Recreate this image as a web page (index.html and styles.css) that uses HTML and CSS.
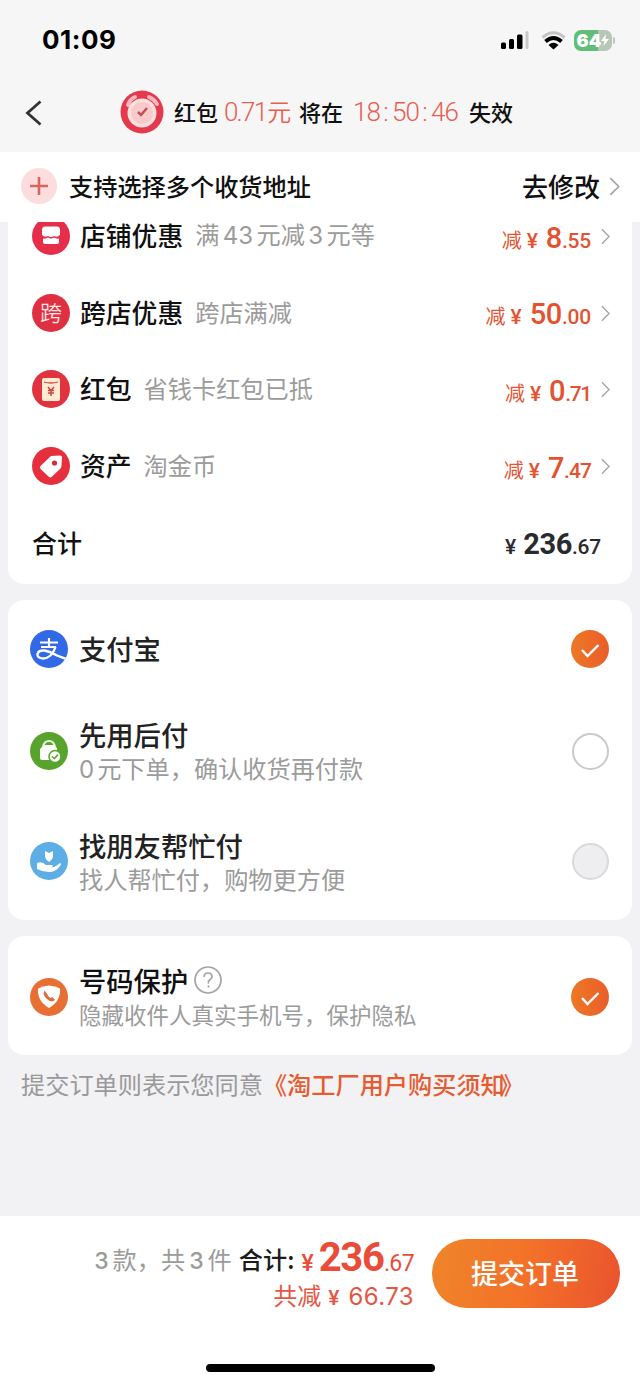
FILE: index.html
```html
<!DOCTYPE html>
<html lang="zh-CN">
<head>
<meta charset="utf-8">
<title>确认订单</title>
<link rel="stylesheet" href="styles.css">
</head>
<body>
<header class="top">
  <div class="status">
    <span class="clock">01:09</span>
    <span class="status-icons">
      <svg class="signal" width="29" height="20" viewBox="0 0 29 20"><rect x="1" y="12.500" width="5" height="6.500" rx="1.5"/><rect x="9" y="9" width="5" height="10" rx="1.500"/><rect x="17" y="4.500" width="5.500" height="14.500" rx="1.500"/><rect x="25.500" y="1" width="3" height="18" rx="1.500" fill="#c9c9c9"/></svg>
      <svg class="wifi" width="25" height="19" viewBox="0 0 25 19" fill="none"><path d="M1.500 6.500Q12.500-3 23.500 6.500" stroke="#c4c4c4" stroke-width="3"/><path d="M4.500 10.500Q12.500 3.500 20.500 10.500" stroke="#000" stroke-width="3.800"/><path d="M7.500 14Q12.500 9.500 17.500 14L12.500 18.500Z" fill="#000"/></svg>
      <span class="battery"><b>64</b><svg width="8" height="12" viewBox="0 0 8 12"><path d="M5 0L0 7H3.500L2.500 12L8 5H4.500Z" fill="#fff"/></svg></span>
      <i class="battery-tip"></i>
    </span>
  </div>
  <div class="nav">
    <svg class="back" width="18" height="26" viewBox="0 0 18 26"><path d="M15.500 1.500L2.500 13L15.500 24.500" fill="none" stroke="#333" stroke-width="2.800"/></svg>
    <svg class="alarm" width="44" height="44" viewBox="0 0 44 44"><circle cx="22" cy="22" r="21.500" fill="#e5394e"/><path d="M8 15Q10 9 15 7M29 7Q34 9 37 14" stroke="#f9b6bb" stroke-width="4" stroke-linecap="round" fill="none"/><circle cx="22" cy="23" r="14.500" fill="#fbe0dd"/><circle cx="22" cy="23" r="11" fill="#f8cbca"/><path d="M18 22L21 25L27 18" stroke="#bd5259" stroke-width="2.500" fill="none"/></svg>
    <div class="notice"><span class="w1">红包</span><span class="w2"><em>0.71</em>元</span><span class="w3">将在</span><span class="w4"><em>18</em><em>:</em><em>50</em><em>:</em><em>46</em></span><span>失效</span></div>
  </div>
</header>

<section class="address">
  <svg class="plus" width="36" height="36" viewBox="0 0 36 36"><circle cx="18" cy="18" r="18" fill="#fcdcdd"/><path d="M18 9V27M9 18H27" stroke="#d76561" stroke-width="2.600"/></svg>
  <span class="address-text">支持选择多个收货地址</span>
  <span class="modify">去修改</span>
  <svg class="chev big" viewBox="0 0 10 18"><path d="M1 1L9 9L1 17"/></svg>
</section>

<main>
  <div class="clip">
  <section class="card discounts">
    <div class="row">
      <svg class="ico" viewBox="0 0 38 38"><circle cx="19" cy="19" r="19" fill="#e62d49"/><path d="M13 9.500H25Q28 9.500 28 13V18Q25 21 22 19Q19 21 16 19Q13 21 10 18V13Q10 9.500 13 9.500Z" fill="#fff"/><path d="M11 21.500Q14 22 16 20.500Q19 22.500 22 20.500Q24 22 27 21.500V25Q27 27 25 27H13Q11 27 11 25Z" fill="#fff"/></svg>
      <span class="name">店铺优惠</span><span class="sub">满<em>43</em>元减<em>3</em>元等</span>
      <span class="amount"><span class="cut">减</span><span class="yen">¥</span><b>8</b><small>.55</small></span>
      <svg class="chev" viewBox="0 0 10 18"><path d="M1 1L9 9L1 17"/></svg>
    </div>
    <div class="row">
      <span class="ico kua">跨</span>
      <span class="name">跨店优惠</span><span class="sub">跨店满减</span>
      <span class="amount"><span class="cut">减</span><span class="yen">¥</span><b>50</b><small>.00</small></span>
      <svg class="chev" viewBox="0 0 10 18"><path d="M1 1L9 9L1 17"/></svg>
    </div>
    <div class="row">
      <svg class="ico" viewBox="0 0 38 38"><circle cx="19" cy="19" r="19" fill="#e13240"/><rect x="10" y="8" width="18" height="23" rx="2" fill="#ffebd2"/><path d="M12 12Q19 14 26 12" fill="none" stroke="#d44a43" stroke-width="1.300"/><path d="M16 17L19 20.500L22 17M19 20V26M16 20.500H22M16 23H22" fill="none" stroke="#c54a3d" stroke-width="1.500"/></svg>
      <span class="name">红包</span><span class="sub">省钱卡红包已抵</span>
      <span class="amount tight"><span class="cut">减</span><span class="yen">¥</span><b>0</b><small>.71</small></span>
      <svg class="chev" viewBox="0 0 10 18"><path d="M1 1L9 9L1 17"/></svg>
    </div>
    <div class="row">
      <svg class="ico" viewBox="0 0 38 38"><circle cx="19" cy="19" r="19" fill="#e52f3c"/><path d="M19 9L28 8.500Q30 8.500 30 10.500L29.500 19Q29.500 20.500 28 22L19.500 30Q18 31 16.500 29.500L8.500 22Q7.500 20.500 8.500 19Z" fill="#fff"/><circle cx="22.500" cy="16" r="2.600" fill="#d12f38"/></svg>
      <span class="name">资产</span><span class="sub">淘金币</span>
      <span class="amount snug"><span class="cut">减</span><span class="yen">¥</span><b>7</b><small>.47</small></span>
      <svg class="chev" viewBox="0 0 10 18"><path d="M1 1L9 9L1 17"/></svg>
    </div>
    <div class="row total">
      <span class="name">合计</span>
      <span class="amount"><span class="yen">¥</span><b>236</b><small>.67</small></span>
    </div>
  </section>
  </div>

  <section class="card pay">
    <div class="option first">
      <svg class="ico" viewBox="0 0 38 38"><defs><clipPath id="disc"><circle cx="19" cy="19" r="19"/></clipPath></defs><circle cx="19" cy="19" r="19" fill="#3269e6"/><g clip-path="url(#disc)" fill="none" stroke="#fff"><path d="M10 12.500H28M19 8V17M11 17H26" stroke-width="2.100"/><path d="M25.500 17Q22 28 13 28.500Q7 28 7.500 24Q8.500 20 14.500 20.500Q20 21.500 27 25.500L39 30" stroke-width="2.400"/></g></svg>
      <div class="label"><span class="name">支付宝</span></div>
      <svg class="check" viewBox="0 0 38 38"><circle cx="19" cy="19" r="19" fill="url(#orange)"/><path d="M11 20L16.500 26L27.500 15" fill="none" stroke="#fff" stroke-width="2.400"/><defs><linearGradient id="orange"><stop offset="0" stop-color="#ed7826"/><stop offset="1" stop-color="#ea5d29"/></linearGradient></defs></svg>
    </div>
    <div class="option second">
      <svg class="ico" viewBox="0 0 38 38"><circle cx="19" cy="19" r="19" fill="#58a32c"/><path d="M10 17L14 13H24L27 16V28H12Q10 28 10 26Z" fill="#fff"/><path d="M13 15Q14 9 19 9Q24 9 25 15" fill="none" stroke="#e9f8df" stroke-width="2"/><circle cx="25" cy="24.500" r="6" fill="#fff" stroke="#58a32c" stroke-width="1.500"/><path d="M22 24.500L24.500 26.500L28 22.500" fill="none" stroke="#58a32c" stroke-width="1.600"/></svg>
      <div class="label"><span class="name">先用后付</span><span class="sub"><em>0</em>元下单，确认收货再付款</span></div>
      <span class="radio"></span>
    </div>
    <div class="option third">
      <svg class="ico" viewBox="0 0 38 38"><circle cx="19" cy="19" r="19" fill="#5caee4"/><path d="M15 9L19 11L23 9V15Q22 18 19 20Q16 18 15 15Z" fill="#fff"/><path d="M7 21Q12 19 16 23H22Q24 24 21 26H16Q24 27 30 21Q32 22 30 24Q26 30 19 30Q13 30 7 27Z" fill="#fff"/></svg>
      <div class="label"><span class="name">找朋友帮忙付</span><span class="sub">找人帮忙付，购物更方便</span></div>
      <span class="radio off"></span>
    </div>
  </section>

  <section class="card privacy">
    <div class="option">
      <svg class="ico" viewBox="0 0 38 38"><circle cx="19" cy="19" r="19" fill="#e76f33"/><path d="M19 7.500Q25 8 30 10.500Q31 23 19 30Q7 23 8 10.500Q13 8 19 7.500Z" fill="#fff"/><path d="M14.500 12.500Q12 17 17 21Q21 25 25 22L22.500 19L20.500 20Q17.500 18 17.500 16.500Z" fill="#de6d3b"/></svg>
      <div class="label"><span class="name">号码保护<svg class="help" width="28" height="28" viewBox="0 0 28 28" fill="none" stroke="#a4a4a4"><circle cx="14" cy="14" r="13" stroke-width="1.700"/><path d="M10 11Q10 7 14 7Q18 7 18 10.500Q18 12.500 14.500 15V17.500M14.500 19.500V21.500" stroke-width="1.700"/></svg></span><span class="sub">隐藏收件人真实手机号，保护隐私</span></div>
      <svg class="check" viewBox="0 0 38 38"><circle cx="19" cy="19" r="19" fill="url(#orange)"/><path d="M11 20L16.500 26L27.500 15" fill="none" stroke="#fff" stroke-width="2.400"/></svg>
    </div>
  </section>
  <p class="agreement">提交订单则表示您同意<a>《淘工厂用户购买须知<span>》</span></a></p>
</main>

<footer class="submit-bar">
  <div class="checkout">
    <div class="sum">
      <div class="sum-line"><span class="count"><em>3</em>款，共<em>3</em>件</span><span class="sum-label">合计:</span><span class="yen">¥</span><b>236</b><small>.67</small></div>
      <div class="saved"><span>共减</span><span class="yen">¥</span><em>66.73</em></div>
    </div>
    <button class="submit">提交订单</button>
  </div>
  <div class="home"></div>
</footer>
</body>
</html>
```

FILE: styles.css
```css
* { box-sizing: border-box; }
body {
  margin: 0;
  width: 640px;
  height: 1386px;
  display: flex;
  flex-direction: column;
  overflow: hidden;
  background: #f2f1f4;
  color: #111;
  font-family: "Noto Sans CJK SC", sans-serif;
  font-weight: 500;
  white-space: nowrap;
}
em, i { font-style: normal; }
svg { display: block; flex: none; }

.top { height: 152px; background: #f6f6f6; flex: none; }
.status {
  height: 78px;
  display: flex;
  align-items: center;
  justify-content: space-between;
  padding: 2px 25px 0 42px;
}
.clock { font: 700 26px/32px Inter, sans-serif; color: #000; letter-spacing: .5px; }
.status-icons { display: flex; align-items: center; }
.wifi { margin: 0 8px 0 12px; }
.battery {
  width: 38px;
  height: 21px;
  border-radius: 7px;
  display: flex;
  align-items: center;
  justify-content: center;
  background: linear-gradient(90deg, #63bd78 64%, #b5c7b7 64%);
  color: #fff;
  font: 700 18px/21px Inter, sans-serif;
}
.battery-tip { width: 2px; height: 7px; margin-left: 1px; border-radius: 0 2px 2px 0; background: #b9c6ba; }

.nav { height: 70px; display: flex; align-items: center; padding-left: 25px; }
.alarm { margin-left: 77px; margin-right: 10px; margin-top: -2px; }
.notice { display: flex; align-items: baseline; font-size: 22px; line-height: 32px; margin-top: -3px; }
.notice em { font-family: Roboto, sans-serif; font-weight: 300; }
.w1 { width: 50px; }
.w2 { width: 75px; font-size: 24px; font-weight: 350; color: #e95e50; }
.w2 em { font-size: 26px; letter-spacing: -1.8px; margin-right: 1px; }
.w3 { width: 54px; }
.w4 { width: 116px; display: flex; color: #e95e50; font-size: 26px; }
.w4 em:nth-child(odd) { width: 27px; letter-spacing: -1px; }
.w4 em:nth-child(even) { width: 12px; text-align: center; }

.address {
  height: 70px;
  flex: none;
  display: flex;
  align-items: center;
  padding: 0 20px 2px 21px;
  background: #fff;
}
.address-text { margin-left: 12px; margin-top: -1px; font-size: 24.200px; line-height: 36px; }
.modify { margin-left: auto; margin-right: 9px; font-size: 26px; line-height: 36px; }
.chev { width: 9px; height: 17px; fill: none; stroke: #a5a5a8; stroke-width: 1.600; }
.chev.big { width: 11px; height: 19px; }

main { padding: 0 8px; flex: none; height: 994px; }
.clip { height: 362px; overflow: hidden; }
.card { background: #fff; border-radius: 16px; }
.discounts { margin-top: -24px; height: 386px; padding: 0 23px 0 24px; }
.row { height: 76.600px; display: flex; align-items: center; }
.ico { width: 38px; height: 38px; flex: none; }
.kua { border-radius: 50%; background: #df3042; color: #ffe6e2; font-size: 22px; font-weight: 350; line-height: 35px; text-align: center; }
.row .name { margin-left: 10px; font-size: 25.800px; line-height: 36px; margin-top: -2px; }
.sub { font-size: 24.200px; line-height: 34px; font-weight: 400; color: #9b9b9b; }
.sub em { font: 400 24px/34px Inter, sans-serif; margin: 0 4px; }
.row .sub { margin-left: 12px; margin-top: -2px; }
.row .sub em { margin: 0 3.400px; }
.amount { margin-left: auto; margin-top: 6px; display: flex; align-items: baseline; color: #e35332; font-family: Roboto, sans-serif; line-height: 34px; }
.cut { font-family: "Noto Sans CJK SC", sans-serif; font-size: 20px; font-weight: 400; line-height: 24px; }
.yen { font: 500 21px/24px Roboto, sans-serif; margin: 0 8px 0 5px; }
.amount b { font-size: 29px; font-weight: 500; letter-spacing: -.4px; }
.amount small { font-size: 21px; font-weight: 500; letter-spacing: -.2px; }
.tight small { letter-spacing: -1.300px; }
.snug small { letter-spacing: -.900px; }
.row .chev { margin-left: 10px; margin-right: -1px; margin-top: 1px; }
.total .name { margin-left: 0; font-size: 25px; margin-top: -1px; }
.total .amount { color: #292a2d; margin-right: 8px; }
.total .amount b { font-weight: 700; }
.total .yen { margin-right: 7px; }

.pay { margin-top: 16px; height: 320px; color: #222; }
.option { display: flex; align-items: center; padding: 0 23px 0 22px; }
.first { height: 97px; }
.second { height: 108px; }
.third { height: 112px; }
.label { display: flex; flex-direction: column; margin-left: 11px; margin-right: auto; }
.label .name { font-size: 27.300px; line-height: 38px; display: flex; align-items: center; }
.label .sub { line-height: 30px; }
.label .sub em { margin: 0 3px 0 0; }
.first .label { margin-top: -1px; }
.second .label { margin-top: -1px; }
.third .label { margin-top: -2px; }
.check { width: 38px; height: 38px; }
.radio { width: 37px; height: 37px; border: 2px solid #c9c9ce; border-radius: 50%; }
.radio.off { background: #eeedf0; border-color: #dad9dd; }

.privacy { margin-top: 16px; height: 119px; }
.privacy .option { height: 121px; }
.privacy .sub { font-size: 22.500px; }
.privacy .label { margin-top: -4px; }
.help { margin-left: 6px; }

.agreement { margin: 0; padding: 11px 0 0 13px; font-size: 24.200px; line-height: 36px; font-weight: 400; color: #999; }
.agreement a { color: #e65c31; font-weight: 500; }
.agreement a span { margin-left: -5px; }

.submit-bar { height: 170px; background: #fff; flex: none; display: flex; flex-direction: column; align-items: center; }
.checkout { width: 100%; height: 148px; display: flex; align-items: flex-start; padding: 23px 20px 0 0; justify-content: flex-end; }
.sum { display: flex; flex-direction: column; align-items: flex-end; margin-right: 18px; }
.sum-line { display: flex; align-items: baseline; height: 38px; line-height: 38px; color: #e94d3a; }
.count { color: #9b9b9b; font-size: 24.200px; font-weight: 400; margin-right: 7px; position: relative; top: -2px; }
.count em { font: 500 23px/38px Inter, sans-serif; margin: 0 4px; }
.sum-label { color: #1c1c1c; font-size: 24.200px; position: relative; top: -2px; }
.sum-line .yen { font-size: 23px; margin: 0 5px 0 7px; }
.sum-line b { font: 700 40px/38px Roboto, sans-serif; letter-spacing: -1.200px; }
.sum-line small { font: 400 23px/38px Roboto, sans-serif; letter-spacing: -.6px; }
.saved { display: flex; align-items: baseline; color: #e55744; font-size: 24px; line-height: 36px; font-weight: 400; }
.saved .yen { margin: 0 9px 0 7px; }
.saved em { font: 400 24px/36px Inter, sans-serif; letter-spacing: .4px; }
.submit {
  width: 188px;
  height: 69px;
  flex: none;
  border: 0;
  border-radius: 35px;
  padding: 0 2px 2px 0;
  background: linear-gradient(100deg, #ef8529, #f37129 50%, #e9532e);
  color: #fff;
  font: 500 27px/40px "Noto Sans CJK SC", sans-serif;
}
.home { width: 229px; height: 8px; border-radius: 4px; background: #000; }
```
